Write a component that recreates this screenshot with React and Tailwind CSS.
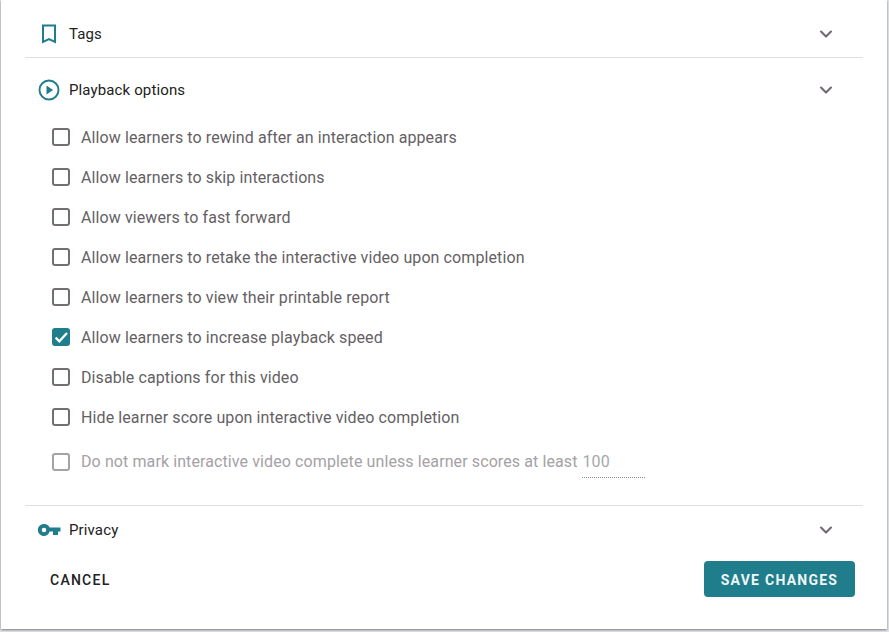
import { ChevronDown } from "lucide-react";

const options = [
  { label: "Allow learners to rewind after an interaction appears" },
  { label: "Allow learners to skip interactions" },
  { label: "Allow viewers to fast forward" },
  { label: "Allow learners to retake the interactive video upon completion" },
  { label: "Allow learners to view their printable report" },
  { label: "Allow learners to increase playback speed", checked: true },
  { label: "Disable captions for this video" },
  { label: "Hide learner score upon interactive video completion" },
];

function Checkbox({ checked, disabled }) {
  if (checked) {
    return (
      <span className="mb-[2px] flex h-[18px] w-[18px] shrink-0 items-center justify-center rounded-[3px] bg-[#1f7d8c]">
        <svg className="h-[16px] w-[16px] text-white" fill="none" stroke="currentColor" strokeWidth="3.4" viewBox="0 0 24 24">
          <path d="M4 13l5.5 5.5L21 6" />
        </svg>
      </span>
    );
  }
  return (
    <span
      className={`mb-[2px] h-[18px] w-[18px] shrink-0 rounded-[3px] border-2 ${disabled ? "border-[#a5a1a5]" : "border-[#746e74]"}`}
    />
  );
}

function SectionHeader({ icon, title }) {
  return (
    <div className="flex h-[24px] items-center">
      <div className="flex w-[44px] shrink-0 items-center justify-center pl-[4px]">{icon}</div>
      <span className="text-[15px] leading-[24px] tracking-[0.13px] text-[#212121]">{title}</span>
      <ChevronDown className="mb-[1px] ml-auto mr-[27px] h-[20px] w-[20px] text-[#6e6670]" strokeWidth={2.5} />
    </div>
  );
}

export default function App() {
  return (
    <div className="h-[632px] w-[889px] overflow-hidden bg-[#dfe3e8] font-['Roboto',sans-serif]">
      <div className="ml-[1px] flex h-[629px] w-[886px] flex-col bg-white pl-[24px] shadow-[0_1px_2px_rgba(0,0,0,0.45)]">
        <div className="w-[838px]">
          <div className="border-b border-[#dfdfdf] pt-[22px] pb-[11px]">
            <SectionHeader
              title="Tags"
              icon={
                <svg className="h-[20px] w-[16px] text-[#1f7d8c]" viewBox="0 0 16 20" fill="none" stroke="currentColor" strokeWidth="2">
                  <path d="M2 1.5h12v16.5l-6-3-6 3z" />
                </svg>
              }
            />
          </div>

          <div className="border-b border-[#dfdfdf] pt-[20px] pb-[23px]">
            <SectionHeader
              title="Playback options"
              icon={
                <svg className="h-[22px] w-[22px] text-[#1f7d8c]" viewBox="0 0 22 22" fill="none">
                  <circle cx="11" cy="11" r="9.5" stroke="currentColor" strokeWidth="1.9" />
                  <path d="M8.5 6.5v9l6.5-4.5z" fill="currentColor" />
                </svg>
              }
            />
            <div className="mt-[16px] flex flex-col pl-[27px]">
              {options.map((opt) => (
                <label key={opt.label} className="flex h-[40px] items-center gap-[11px]">
                  <Checkbox checked={opt.checked} />
                  <span className="text-[16px] tracking-[0.1px] text-[#655f65]">{opt.label}</span>
                </label>
              ))}
              <label className="mt-[4px] flex h-[40px] items-start gap-[11px] pt-[11px]">
                <Checkbox disabled />
                <span className="text-[16px] leading-[18px] tracking-[0.1px] text-[#a5a1a5]">
                  Do not mark interactive video complete unless learner scores at least
                </span>
                <span className="relative -ml-[7px] w-[63px] border-b border-dotted border-[#8a8a8a] pb-[6px] pl-[1px] text-[16px] leading-[18px] tracking-[0.1px] text-[#a5a9ad]">
                  100
                </span>
              </label>
            </div>
          </div>

          <div className="pt-[12px]">
            <SectionHeader
              title="Privacy"
              icon={
                <svg className="h-[12px] w-[23px] text-[#1f7d8c]" viewBox="0 0 23 12" fill="currentColor">
                  <path fillRule="evenodd" d="M6 0a6 6 0 0 1 5.6 3.6h10.900v3.900h-2.500V11h-5V7.500h-3.400A6 6 0 1 1 6 0zm0 3.700a2.300 2.300 0 1 0 0 4.600 2.300 2.300 0 0 0 0-4.600z" />
                </svg>
              }
            />
          </div>
        </div>

        <div className="mt-[19px] flex w-[830px] items-center justify-between">
          <button className="pl-[25px] pt-[3px] text-[14px] font-medium tracking-[1.25px] text-[#212121]">CANCEL</button>
          <button className="h-[36px] w-[151px] rounded-[4px] bg-[#1f7d8c] pt-[2px] text-[14px] font-bold tracking-[1.25px] text-[#eef7f8]">
            SAVE CHANGES
          </button>
        </div>
      </div>
    </div>
  );
}
